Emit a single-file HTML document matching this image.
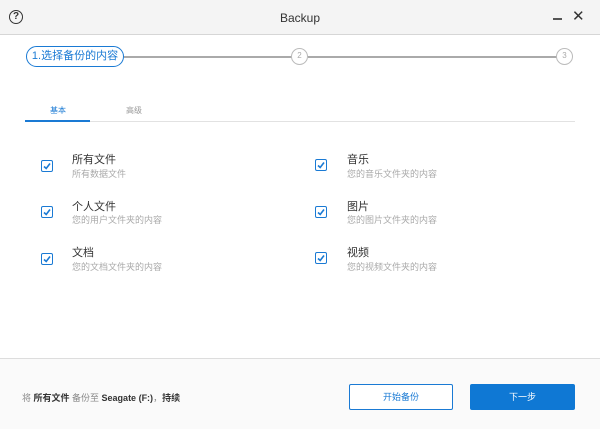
<!DOCTYPE html>
<html><head><meta charset="utf-8"><style>
*{margin:0;padding:0;box-sizing:border-box}
body{width:600px;height:429px;overflow:hidden;background:#fff;font-family:"Liberation Sans","Noto Sans CJK SC",sans-serif;position:relative}
.abs{position:absolute}
.title{left:0;top:0;width:600px;height:35px;background:#f4f4f4;border-bottom:1px solid #d6d6d6}
.cb{width:12px;height:12px;border:1.5px solid #1a7ad4;border-radius:2px;background:#fff}
.cb svg{position:absolute;left:1px;top:1px}
.t1{font-size:11px;color:#333}
.t2{font-size:9px;color:#aaa}
</style></head><body>
<div class="abs title"></div>
<div class="abs" style="left:9px;top:10px;width:14px;height:14px;border:1.6px solid #333;border-radius:50%;font-size:10px;font-weight:bold;text-align:center;line-height:11px;color:#333">?</div>
<div class="abs" style="left:0;width:600px;top:11px;text-align:center;font-size:12px;color:#333">Backup</div>
<div class="abs" style="left:553px;top:18px;width:9px;height:1.5px;background:#555"></div>
<div class="abs" style="left:572px;top:9px;font-size:15px;color:#333;line-height:16px">✕</div>

<div class="abs" style="left:26px;top:46px;width:98px;height:21px;border:1.5px solid #1a7ad4;border-radius:11px;font-size:11px;color:#1a7ad4;text-align:center;line-height:18px">1.选择备份的内容</div>
<div class="abs" style="left:124px;top:56px;width:168px;height:1.5px;background:#aaa"></div>
<div class="abs" style="left:291px;top:48px;width:17px;height:17px;border:1.5px solid #bbb;border-radius:50%;font-size:8px;color:#aaa;text-align:center;line-height:14px">2</div>
<div class="abs" style="left:308px;top:56px;width:249px;height:1.5px;background:#aaa"></div>
<div class="abs" style="left:556px;top:48px;width:17px;height:17px;border:1.5px solid #bbb;border-radius:50%;font-size:8px;color:#aaa;text-align:center;line-height:14px">3</div>

<div class="abs" style="left:50px;top:105px;font-size:8px;color:#1a7ad4">基本</div>
<div class="abs" style="left:126px;top:105px;font-size:8px;color:#999">高级</div>
<div class="abs" style="left:25px;top:121px;width:550px;height:1px;background:#e2e2e2"></div>
<div class="abs" style="left:25px;top:120px;width:65px;height:2px;background:#1a7ad4"></div>

<div class="abs cb" style="left:41px;top:160px"><svg width="8" height="8"><path d="M1 4.5L3.2 6.5L7 1.5" stroke="#1a7ad4" stroke-width="1.6" fill="none"/></svg></div>
<div class="abs t1" style="left:72px;top:151px">所有文件</div>
<div class="abs t2" style="left:72px;top:167px">所有数据文件</div>
<div class="abs cb" style="left:41px;top:206px"><svg width="8" height="8"><path d="M1 4.5L3.2 6.5L7 1.5" stroke="#1a7ad4" stroke-width="1.6" fill="none"/></svg></div>
<div class="abs t1" style="left:72px;top:198px">个人文件</div>
<div class="abs t2" style="left:72px;top:213px">您的用户文件夹的内容</div>
<div class="abs cb" style="left:41px;top:253px"><svg width="8" height="8"><path d="M1 4.5L3.2 6.5L7 1.5" stroke="#1a7ad4" stroke-width="1.6" fill="none"/></svg></div>
<div class="abs t1" style="left:72px;top:244px">文档</div>
<div class="abs t2" style="left:72px;top:260px">您的文档文件夹的内容</div>

<div class="abs cb" style="left:315px;top:159px"><svg width="8" height="8"><path d="M1 4.5L3.2 6.5L7 1.5" stroke="#1a7ad4" stroke-width="1.6" fill="none"/></svg></div>
<div class="abs t1" style="left:347px;top:151px">音乐</div>
<div class="abs t2" style="left:347px;top:167px">您的音乐文件夹的内容</div>
<div class="abs cb" style="left:315px;top:206px"><svg width="8" height="8"><path d="M1 4.5L3.2 6.5L7 1.5" stroke="#1a7ad4" stroke-width="1.6" fill="none"/></svg></div>
<div class="abs t1" style="left:347px;top:198px">图片</div>
<div class="abs t2" style="left:347px;top:213px">您的图片文件夹的内容</div>
<div class="abs cb" style="left:315px;top:252px"><svg width="8" height="8"><path d="M1 4.5L3.2 6.5L7 1.5" stroke="#1a7ad4" stroke-width="1.6" fill="none"/></svg></div>
<div class="abs t1" style="left:347px;top:244px">视频</div>
<div class="abs t2" style="left:347px;top:260px">您的视频文件夹的内容</div>

<div class="abs" style="left:0;top:358px;width:600px;height:71px;background:#fafafa;border-top:1px solid #ddd"></div>
<div class="abs" style="left:22px;top:391px;font-size:9px;color:#888">将 <b style="color:#333">所有文件</b> 备份至 <b style="color:#333">Seagate (F:)</b>，<b style="color:#333">持续</b></div>
<div class="abs" style="left:349px;top:384px;width:104px;height:26px;border:1px solid #1a7ad4;border-radius:2px;background:#fff;color:#1a7ad4;font-size:9px;text-align:center;line-height:24px">开始备份</div>
<div class="abs" style="left:470px;top:384px;width:105px;height:26px;border-radius:2px;background:#0f78d4;color:#fff;font-size:9px;text-align:center;line-height:26px">下一步</div>
</body></html>
